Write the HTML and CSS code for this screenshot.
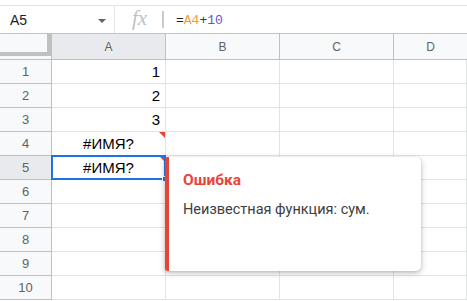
FILE: index.html
```html
<!DOCTYPE html>
<html>
<head>
<meta charset="utf-8">
<link rel="stylesheet" href="styles.css">
</head>
<body>
<div class="topgap"></div>
<div class="fbar">
  <div class="namebox"><span class="ref">A5</span><span class="caret"></span></div>
  <div class="fxbox"><span class="fx">fx</span></div>
  <div class="sep"></div>
  <div class="formula">=<span class="rA">A4</span><span class="op">+</span><span class="num">10</span></div>
</div>
<div class="sheet">
  <div class="corner"><div class="freeze"></div></div>
  <div class="colh sel">A</div>
  <div class="colh">B</div>
  <div class="colh">C</div>
  <div class="colh last">D</div>

  <div class="rowh">1</div><div class="cell num">1</div><div class="cell"></div><div class="cell"></div><div class="cell"></div>
  <div class="rowh">2</div><div class="cell num">2</div><div class="cell"></div><div class="cell"></div><div class="cell"></div>
  <div class="rowh">3</div><div class="cell num">3</div><div class="cell"></div><div class="cell"></div><div class="cell"></div>
  <div class="rowh">4</div><div class="cell err">#ИМЯ?<span class="tri"></span></div><div class="cell"></div><div class="cell"></div><div class="cell"></div>
  <div class="rowh sel">5</div><div class="cell err active">#ИМЯ?<span class="tri"></span><span class="selbox"></span><span class="handle"></span></div><div class="cell"></div><div class="cell"></div><div class="cell"></div>
  <div class="rowh">6</div><div class="cell"></div><div class="cell"></div><div class="cell"></div><div class="cell"></div>
  <div class="rowh">7</div><div class="cell"></div><div class="cell"></div><div class="cell"></div><div class="cell"></div>
  <div class="rowh">8</div><div class="cell"></div><div class="cell"></div><div class="cell"></div><div class="cell"></div>
  <div class="rowh">9</div><div class="cell"></div><div class="cell"></div><div class="cell"></div><div class="cell"></div>
  <div class="rowh">10</div><div class="cell"></div><div class="cell"></div><div class="cell"></div><div class="cell"></div>
</div>
<div class="popup">
  <div class="ptitle">Ошибка</div>
  <div class="pbody">Неизвестная функция: сум.</div>
</div>
</body>
</html>
```

FILE: styles.css
```css
html, body {
  margin: 0;
  padding: 0;
  background: #fff;
  overflow: hidden;
}
body {
  width: 467px;
  height: 301px;
  position: relative;
  font-family: "Liberation Sans", Arial, sans-serif;
}
.topgap {
  height: 5px;
}
.fbar {
  display: flex;
  align-items: center;
  height: 27px;
  border-top: 1px solid #e3e3e3;
  border-bottom: 1px solid #c4c4c4;
}
.namebox {
  width: 115px;
  height: 100%;
  box-sizing: border-box;
  border-right: 1px solid #e3e3e3;
  display: flex;
  align-items: center;
  padding-left: 10px;
  padding-top: 1px;
}
.ref {
  font-size: 14px;
  color: #202124;
  flex: 1;
}
.caret {
  width: 0;
  height: 0;
  border-left: 4px solid transparent;
  border-right: 4px solid transparent;
  border-top: 4px solid #5f6368;
  margin-right: 8px;
  margin-top: 2px;
}
.fxbox {
  width: 47px;
  height: 100%;
  display: flex;
  align-items: center;
  justify-content: center;
}
.fx {
  font-family: "Liberation Serif", "Times New Roman", serif;
  font-style: italic;
  font-size: 21px;
  color: #bdc1c6;
  margin-left: 2px;
  margin-top: -2px;
}
.sep {
  width: 2px;
  height: 17px;
  background: #c8cacc;
}
.formula {
  margin-left: 12px;
  font-family: "Liberation Mono", "DejaVu Sans Mono", monospace;
  font-size: 13px;
  color: #202124;
  padding-top: 1px;
}
.rA { color: #f29b38; }
.op { color: #3b2a6e; }
.num { color: #5a57d1; }

.sheet {
  display: grid;
  grid-template-columns: 52px 114px 114px 114px 1fr;
  grid-template-rows: 26px repeat(10, 24px);
}
.sheet > div {
  box-sizing: border-box;
}
.corner {
  background: #f8f9fa;
  border-right: 1px solid #c0c0c0;
  border-bottom: 1px solid #c0c0c0;
}
.freeze {
  width: 51px;
  height: 22px;
  box-sizing: border-box;
  background: #f8f9fa;
  border-right: 4px solid #c0c0c0;
  border-bottom: 4px solid #c0c0c0;
}
.colh {
  background: #f8f9fa;
  border-right: 1px solid #c0c0c0;
  border-bottom: 1px solid #c0c0c0;
  display: flex;
  align-items: center;
  justify-content: center;
  font-size: 12px;
  color: #5f6368;
  padding-top: 1px;
}
.colh.last {
  border-right: none;
}
.colh.sel, .rowh.sel {
  background: #e8eaed;
}
.rowh {
  background: #f8f9fa;
  border-right: 1px solid #c0c0c0;
  border-bottom: 1px solid #c0c0c0;
  display: flex;
  align-items: center;
  justify-content: center;
  font-size: 13px;
  color: #5f6368;
}
.cell {
  border-right: 1px solid #e2e3e3;
  border-bottom: 1px solid #e2e3e3;
  position: relative;
  font-size: 15px;
  color: #000;
  display: flex;
  align-items: center;
}
.cell.num {
  justify-content: flex-end;
  padding-right: 5px;
}
.cell.err {
  justify-content: center;
}
.tri {
  position: absolute;
  top: 0;
  right: 0;
  width: 0;
  height: 0;
  border-top: 6px solid #ea4335;
  border-left: 6px solid transparent;
}
.selbox {
  position: absolute;
  left: -1px;
  top: -1px;
  right: -1px;
  bottom: -1px;
  border: 2px solid #1a73e8;
}
.handle {
  position: absolute;
  right: -3px;
  bottom: -3px;
  width: 6px;
  height: 6px;
  background: #1a73e8;
  border: 1px solid #fff;
  box-sizing: border-box;
}
.popup {
  position: absolute;
  left: 165px;
  top: 157px;
  width: 256px;
  height: 114px;
  box-sizing: border-box;
  background: #fff;
  border-left: 4px solid #ea4335;
  border-radius: 2px 5px 5px 3px;
  box-shadow: 0 2px 6px rgba(60, 64, 67, 0.3), 0 1px 3px rgba(60, 64, 67, 0.15);
  padding: 12px 14px 0 14px;
  font-family: Roboto, "Liberation Sans", Arial, sans-serif;
}
.ptitle {
  font-size: 15.5px;
  font-weight: bold;
  color: #e8453c;
  line-height: 22px;
}
.pbody {
  margin-top: 8px;
  font-size: 14.5px;
  color: #3c4043;
  line-height: 22px;
}
```
